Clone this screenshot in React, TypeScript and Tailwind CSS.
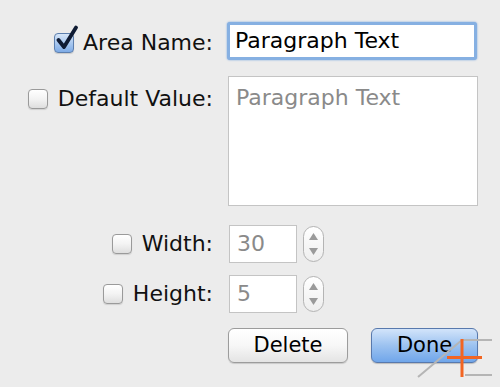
import React from "react";

const font = { fontFamily: '"DejaVu Sans", "Liberation Sans", sans-serif' };

function CheckBox({ checked = false }: { checked?: boolean }) {
  return (
    <span className="relative inline-block h-[20px] w-[20px] shrink-0">
      <span
        className={
          checked
            ? "absolute inset-0 rounded-[4px] border border-[#5d7fae] bg-gradient-to-b from-[#d7e6f8] via-[#a9c8ef] to-[#7eabe6] shadow-[0_1px_1px_rgba(0,0,0,0.15)]"
            : "absolute inset-0 rounded-[4px] border border-[#9a9a9a] bg-gradient-to-b from-white via-[#f3f3f3] to-[#dedede] shadow-[0_1px_1px_rgba(0,0,0,0.12)]"
        }
      />
      {checked && (
        <svg
          className="absolute -top-[8px] left-[1px] h-[26px] w-[24px]"
          viewBox="0 0 24 26"
          fill="none"
        >
          <path
            d="M3.5 15 L9 22 L21 2.5"
            stroke="#0f1b33"
            strokeWidth="3.8"
            strokeLinecap="round"
            strokeLinejoin="round"
          />
        </svg>
      )}
    </span>
  );
}

function Stepper() {
  return (
    <div className="ml-[6px] flex h-[36px] w-[21px] flex-col items-center justify-between rounded-full border border-[#b4b4b4] bg-gradient-to-b from-white to-[#eeeeee] py-[6px]">
      <svg width="9" height="7" viewBox="0 0 9 7">
        <path d="M4.5 0 L9 7 L0 7 Z" fill="#9a9a9a" />
      </svg>
      <svg width="9" height="7" viewBox="0 0 9 7">
        <path d="M0 0 L9 0 L4.5 7 Z" fill="#9a9a9a" />
      </svg>
    </div>
  );
}

export default function App() {
  return (
    <div
      className="relative h-[387px] w-[500px] overflow-hidden bg-[#ececec] text-[22px] leading-[26px] text-[#111]"
      style={font}
    >
      <div className="flex flex-col pt-[22px]">
        {/* Area Name */}
        <div className="flex items-center">
          <div className="flex w-[213px] items-center justify-end gap-[9px] pt-[4px]">
            <CheckBox checked />
            <span>Area Name:</span>
          </div>
          <div className="ml-[14px] h-[38px] w-[250px] rounded-[3px] border-[3px] border-[#86b0e2] bg-white shadow-[0_0_2px_#6d9fdc]">
            <div className="pl-[5px] pt-[3px] text-[22px] leading-[26px] text-black">
              Paragraph Text
            </div>
          </div>
        </div>

        {/* Default Value */}
        <div className="mt-[16px] flex items-start">
          <div className="flex w-[213px] items-center justify-end gap-[10px] pt-[10px]">
            <CheckBox />
            <span>Default Value:</span>
          </div>
          <div className="ml-[15px] h-[130px] w-[250px] border border-[#c4c4c4] bg-white">
            <div className="pl-[7px] pt-[8px] text-[22px] leading-[26px] text-[#8a8a8a]">
              Paragraph Text
            </div>
          </div>
        </div>

        {/* Width */}
        <div className="mt-[19px] flex items-center">
          <div className="flex w-[213px] items-center justify-end gap-[10px]">
            <CheckBox />
            <span>Width:</span>
          </div>
          <div className="ml-[16px] h-[38px] w-[68px] border border-[#c4c4c4] bg-white pl-[7px] pt-[5px] text-[22px] leading-[26px] text-[#8a8a8a]">
            30
          </div>
          <Stepper />
        </div>

        {/* Height */}
        <div className="mt-[12px] flex items-center">
          <div className="flex w-[213px] items-center justify-end gap-[10px]">
            <CheckBox />
            <span>Height:</span>
          </div>
          <div className="ml-[16px] h-[38px] w-[68px] border border-[#c4c4c4] bg-white pl-[7px] pt-[5px] text-[22px] leading-[26px] text-[#8a8a8a]">
            5
          </div>
          <Stepper />
        </div>

        {/* Buttons */}
        <div className="mt-[15px] flex items-center pl-[228px]">
          <button className="h-[35px] w-[120px] rounded-[6px] border border-[#9c9c9c] bg-gradient-to-b from-white via-[#f7f7f7] to-[#e4e4e4] text-[21px] leading-none text-black shadow-[0_1px_1px_rgba(0,0,0,0.15)]">
            Delete
          </button>
          <button className="ml-[23px] h-[35px] w-[107px] rounded-[6px] border border-[#5879ad] bg-gradient-to-b from-[#d2e4fa] via-[#9cc2f0] to-[#70a6ea] text-[21px] leading-none text-black shadow-[0_1px_1px_rgba(0,0,0,0.2)]">
            Done
          </button>
        </div>
      </div>

      {/* resize corner cursor */}
      <svg
        className="absolute left-[410px] top-[330px] h-[57px] w-[90px]"
        viewBox="0 0 90 57"
      >
        <line x1="8" y1="47" x2="52" y2="10" stroke="#b5b5b5" strokeWidth="2" />
        <line x1="53" y1="10" x2="82" y2="10" stroke="#b5b5b5" strokeWidth="2" />
        <line x1="55" y1="45" x2="82" y2="45" stroke="#b5b5b5" strokeWidth="2" />
        <line x1="37" y1="27.5" x2="72" y2="27.5" stroke="#f26522" strokeWidth="3" />
        <line x1="52" y1="9" x2="52" y2="47" stroke="#f26522" strokeWidth="3" />
      </svg>
    </div>
  );
}
